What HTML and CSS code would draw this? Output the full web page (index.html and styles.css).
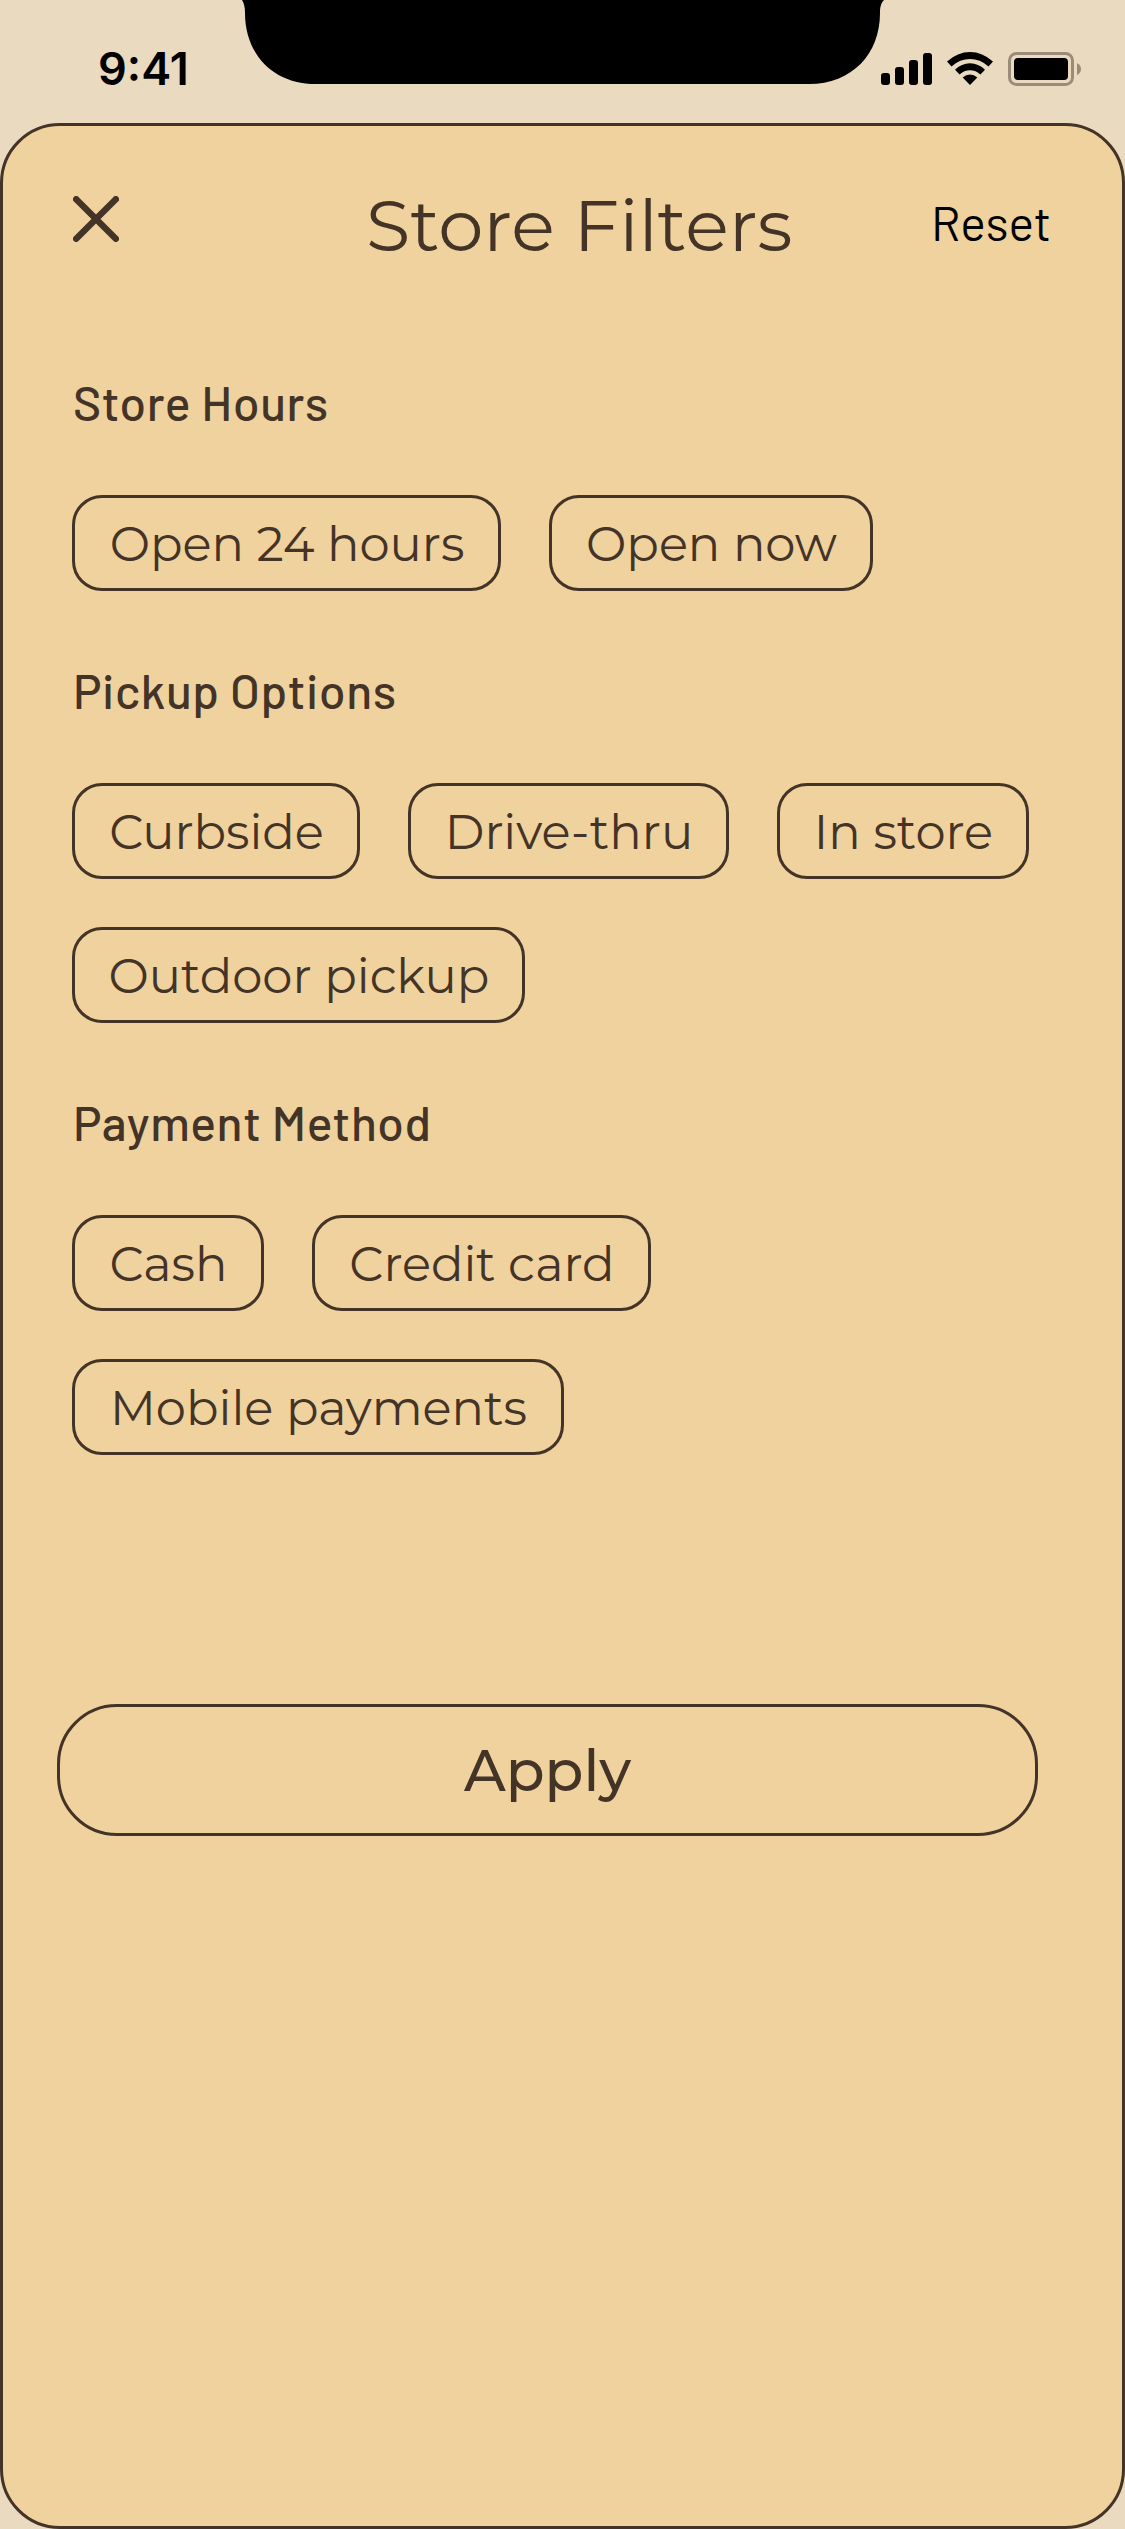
FILE: index.html
```html
<!DOCTYPE html>
<html lang="en">
<head>
<meta charset="utf-8">
<title>Store Filters</title>
<link rel="stylesheet" href="styles.css">
</head>
<body>
<div class="screen">
  <header class="status">
    <time class="clock">9:41</time>
    <svg class="notch" width="642" height="84" viewBox="0 0 642 84" aria-hidden="true">
      <path d="M0 0H642C639 3 638 7 638 13C638 54 610 84 567 84H74C31 84 3 54 3 13C3 7 2 3 0 0Z"/>
    </svg>
    <svg class="indicators" width="204" height="40" viewBox="878 49 204 40" aria-hidden="true">
      <rect x="881" y="73" width="9" height="12" rx="3"/>
      <rect x="895" y="67" width="9" height="18" rx="3"/>
      <rect x="909" y="60" width="9" height="25" rx="3"/>
      <rect x="923" y="53" width="9" height="32" rx="3"/>
      <path d="M947 61.6Q957.500 52 970 52T993 61.600L988.500 66.400Q980 59 970 59T951.500 66.400Z"/>
      <path d="M955 69.800Q961.500 63.300 970 63.300T985 69.800L980.400 74.500Q976 70.200 970 70.200T959.600 74.500Z"/>
      <path d="M962.700 77.600Q966 74.600 970 74.600T977.300 77.600L970 85Z"/>
      <rect class="shell" x="1009.500" y="53.500" width="63" height="31" rx="7"/>
      <rect x="1014" y="58" width="54" height="22" rx="4"/>
      <path class="tip" d="M1077 63Q1081 65 1081 69T1077 75Z"/>
    </svg>
  </header>
  <main class="sheet">
    <div class="bar">
      <button class="close" aria-label="Close">
        <svg width="46" height="46" viewBox="0 0 46 46"><path d="M3.200 3.200L42.800 42.800M42.800 3.200L3.200 42.800"/></svg>
      </button>
      <h1 class="title">Store Filters</h1>
      <button class="reset">Reset</button>
    </div>
    <section class="group">
      <h2 class="label">Store Hours</h2>
      <div class="chips">
        <button class="chip w-open24">Open 24 hours</button>
        <button class="chip w-opennow">Open now</button>
      </div>
    </section>
    <section class="group">
      <h2 class="label">Pickup Options</h2>
      <div class="chips">
        <button class="chip w-curbside">Curbside</button>
        <button class="chip w-drive">Drive-thru</button>
        <button class="chip w-instore">In store</button>
        <button class="chip w-outdoor">Outdoor pickup</button>
      </div>
    </section>
    <section class="group">
      <h2 class="label">Payment Method</h2>
      <div class="chips">
        <button class="chip w-cash">Cash</button>
        <button class="chip w-credit">Credit card</button>
        <button class="chip w-mobile">Mobile payments</button>
      </div>
    </section>
    <button class="apply">Apply</button>
  </main>
</div>
</body>
</html>
```
FILE: styles.css
```css
* { box-sizing: border-box; margin: 0; }

body { background: #eadac0; }

button {
  padding: 0;
  border: 0;
  background: none;
  color: inherit;
  font: inherit;
}

.screen {
  display: flex;
  flex-direction: column;
  width: 1125px;
  height: 2529px;
  color: #443327;
  font-family: Montserrat, Inter, sans-serif;
}

.status {
  display: flex;
  height: 123px;
}

.clock {
  width: 242px;
  padding: 42px 0 0 98px;
  color: #000;
  font: 600 45px/54px Inter, sans-serif;
}

.indicators { margin: 49px 0 0 -6px; }
.shell { fill: none; stroke: #998c7b; stroke-width: 3; }
.tip { fill: #998c7b; }

.sheet {
  display: flex;
  flex: 1;
  flex-direction: column;
  align-items: flex-start;
  border: 3px solid #443327;
  border-radius: 60px;
  background: #efd29d;
}

.bar {
  display: flex;
  width: 100%;
  height: 175px;
  padding: 55px 0 0 70px;
  align-items: flex-start;
}

.close { width: 46px; height: 46px; margin-top: 15px; }
.close svg { display: block; }
.close path { fill: none; stroke: #443327; stroke-width: 6.400; stroke-linecap: round; }

.title {
  width: 565px;
  margin-left: 247px;
  font-size: 72px;
  font-weight: 400;
  line-height: 88px;
  white-space: nowrap;
}

.reset {
  margin-top: 11px;
  color: #000;
  font: 400 48px/60px Barlow, Roboto, sans-serif;
}

.group { padding: 71px 0 0 69px; }
.group + .group { padding-top: 69px; }

.label {
  padding-left: 1px;
  font: 500 48px/60px Barlow, Roboto, sans-serif;
  letter-spacing: 0.6px;
}

.chips {
  display: flex;
  flex-wrap: wrap;
  gap: 48px;
  width: 980px;
  margin-top: 63px;
}

.chip {
  height: 96px;
  padding: 2px 0 0 1px;
  border: 3px solid #443327;
  border-radius: 30px;
  font-size: 48px;
  white-space: nowrap;
}

.w-open24 { width: 429px; }
.w-opennow { width: 324px; }
.w-curbside { width: 288px; }
.w-drive { width: 321px; }
.w-instore { width: 252px; }
.w-outdoor { width: 453px; }
.w-cash { width: 192px; }
.w-credit { width: 339px; }
.w-mobile { width: 492px; }

.apply {
  width: 981px;
  height: 132px;
  margin: 249px 0 0 54px;
  border: 3px solid #443327;
  border-radius: 60px;
  font-size: 57px;
  font-weight: 500;
}
```
